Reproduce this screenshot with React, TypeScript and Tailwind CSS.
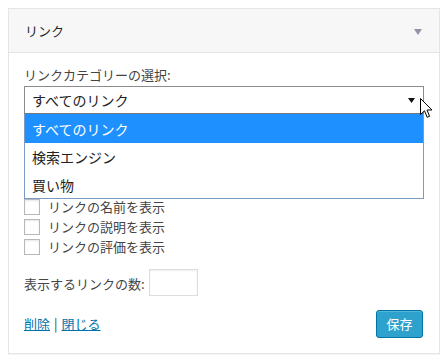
import React from "react";

const font = { fontFamily: '"Noto Sans CJK JP", "Noto Sans", sans-serif' };

function Checkbox({ label }: { label: string }) {
  return (
    <div className="flex items-center h-[20px]">
      <span className="w-[16px] h-[16px] border border-[#b4b9be] bg-white shadow-[inset_0_1px_2px_rgba(0,0,0,0.1)] shrink-0" />
      <span className="ml-[8px] text-[13px] leading-[16px] text-[#444]">{label}</span>
    </div>
  );
}

export default function App() {
  return (
    <div className="w-[448px] h-[362px] bg-white pt-[8px] px-[8px]" style={font}>
      <div className="w-[432px] h-[346px] border border-[#e5e5e5] bg-white shadow-[0_1px_1px_rgba(0,0,0,0.04)] flex flex-col">
        <div className="h-[44px] bg-[#f7f7f7] border-b border-[#e5e5e5] flex items-center justify-between pl-[16px] pr-[17px]">
          <span className="text-[13px] text-[#23282d] leading-[18px]">リンク</span>
          <svg width="8" height="6" viewBox="0 0 8 6" className="mt-[2px]">
            <polygon points="0,0 8,0 4,6" fill="#9a8fa8" />
          </svg>
        </div>
        <div className="px-[15px] pt-[13px] flex flex-col">
          <div className="text-[13px] leading-[18px] text-[#444] h-[20px]">リンクカテゴリーの選択:</div>
          <div className="relative w-[400px]">
            <div className="h-[28px] border border-[#8c8c8c] border-b-[#767676] bg-white flex items-center justify-between pl-[7px] pr-[8px]">
              <span className="text-[14px] leading-[18px] text-[#222]">すべてのリンク</span>
              <svg width="7" height="5" viewBox="0 0 7 5">
                <polygon points="0,0 7,0 3.5,5" fill="#111" />
              </svg>
            </div>
            <div className="absolute left-0 top-[28px] w-[400px] z-10 bg-white border border-t-0 border-[#7a9cc4] text-[14px] leading-[18px]">
              <div className="h-[29px] bg-[#1e90ff] text-white flex items-center pl-[7px]">すべてのリンク</div>
              <div className="h-[28px] text-[#222] flex items-center pl-[7px]">検索エンジン</div>
              <div className="h-[27px] text-[#222] flex items-center pl-[7px]">買い物</div>
            </div>
            <svg className="absolute z-20 left-[396px] top-[12px]" width="13" height="21" viewBox="0 0 13 21">
              <path d="M0.5 0.5 L0.5 16.5 L4.5 12.8 L7.2 19.3 L9.6 18.3 L7 12 L12 12 Z" fill="#fff" stroke="#000" strokeWidth="1" strokeLinejoin="miter" />
            </svg>
          </div>
          <div className="mt-[83px] flex flex-col">
            <Checkbox label="リンクの名前を表示" />
            <Checkbox label="リンクの説明を表示" />
            <Checkbox label="リンクの評価を表示" />
          </div>
          <div className="mt-[12px] flex items-center">
            <span className="text-[13px] leading-[18px] text-[#444] mt-[2px]">表示するリンクの数:</span>
            <span className="ml-[4px] w-[49px] h-[27px] border border-[#ddd] bg-white shadow-[inset_0_1px_2px_rgba(0,0,0,0.07)]" />
          </div>
          <div className="mt-[14px] flex items-center justify-between pr-[1px]">
            <div className="text-[13px] leading-[18px] text-[#444] flex items-center">
              <a className="text-[#0073aa] underline">削除</a>
              <span className="mx-[4px]">|</span>
              <a className="text-[#0073aa] underline">閉じる</a>
            </div>
            <button className="w-[47px] h-[28px] bg-[#2ea2cc] border border-[#0074a2] rounded-[3px] text-white text-[13px] leading-[18px] shadow-[inset_0_1px_0_rgba(120,200,230,0.5)]">保存</button>
          </div>
        </div>
      </div>
    </div>
  );
}
